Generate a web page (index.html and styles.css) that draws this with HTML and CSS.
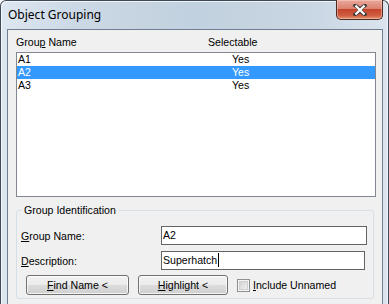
FILE: index.html
```html
<!DOCTYPE html>
<html lang="en">

<head>
    <meta charset="UTF-8">
    <title>Object Grouping</title>
    <link rel="stylesheet" href="styles.css">
</head>

<body>
    <div class="window">
        <div class="titlebar">
            <div class="title">Object Grouping</div>
            <div class="close-btn">
                <svg width="16" height="12" viewBox="0 0 16 12">
                    <path d="M3 1.5 L8 5 L13 1.5 M3 10.5 L8 7 L13 10.5 M5.5 3.2 L10.5 8.8 M10.5 3.2 L5.5 8.8"
                        stroke="#3b3b3b" stroke-width="3.4" fill="none" stroke-linecap="square" />
                    <path d="M4.2 2.2 L11.8 9.8 M11.8 2.2 L4.2 9.8" stroke="#ffffff" stroke-width="2.2"
                        fill="none" stroke-linecap="square" />
                </svg>
            </div>
        </div>

        <div class="client">
            <div class="list-header">
                <span class="col-name">Grou<u>p</u> Name</span>
                <span class="col-select">Selectable</span>
            </div>

            <div class="listbox">
                <div class="list-row">
                    <span class="col-name">A1</span>
                    <span class="col-yes">Yes</span>
                </div>
                <div class="list-row selected">
                    <span class="col-name">A2</span>
                    <span class="col-yes">Yes</span>
                </div>
                <div class="list-row">
                    <span class="col-name">A3</span>
                    <span class="col-yes">Yes</span>
                </div>
            </div>

            <fieldset class="groupbox">
                <legend>Group Identification</legend>

                <div class="field-row">
                    <label class="field-label"><u>G</u>roup Name:</label>
                    <div class="edit edit-name">A2</div>
                </div>

                <div class="field-row second">
                    <label class="field-label"><u>D</u>escription:</label>
                    <div class="edit edit-desc">Superhatch<span class="caret"></span></div>
                </div>

                <div class="button-row">
                    <button class="btn btn-find"><u>F</u>ind Name &lt;</button>
                    <button class="btn btn-highlight"><u>H</u>ighlight &lt;</button>
                    <span class="checkbox"></span>
                    <span class="check-label"><u>I</u>nclude Unnamed</span>
                </div>
            </fieldset>
        </div>
    </div>
</body>

</html>
```

FILE: styles.css
```css
* {
    margin: 0;
    padding: 0;
    box-sizing: border-box;
}

body {
    width: 389px;
    height: 304px;
    overflow: hidden;
    font-family: 'Liberation Sans', Arial, sans-serif;
    font-size: 10.6px;
    color: #000000;
    background: #ffffff;
}

u {
    text-decoration: underline;
    text-underline-offset: 1px;
}

/* Window frame */
.window {
    width: 389px;
    height: 304px;
    padding: 0 5px 0 6px;
    border: 1px solid #3e4a58;
    border-bottom: none;
    border-radius: 6px 6px 0 0;
    background: linear-gradient(90deg, #dde7f1 0%, #cbd8e5 20%, #c2d1df 50%, #c9d6e3 80%, #dae4ee 100%);
    box-shadow: inset 1px 1px 0 rgba(255, 255, 255, 0.7), inset -1px 0 0 rgba(255, 255, 255, 0.6);
}

.titlebar {
    height: 28px;
    display: flex;
    justify-content: space-between;
    align-items: flex-start;
}

.title {
    font-family: 'Noto Sans', 'Open Sans', sans-serif;
    font-size: 12px;
    line-height: 16px;
    padding: 6px 0 0 1px;
    color: #000000;
}

.close-btn {
    width: 47px;
    height: 20px;
    margin-top: -1px;
    border: 1px solid #4f2a23;
    border-top: none;
    border-radius: 0 0 5px 5px;
    background: linear-gradient(#e9a99c 0%, #dd8270 45%, #c5452c 50%, #cf5b3f 80%, #e0936c 100%);
    box-shadow: inset 0 0 0 1px rgba(255, 220, 210, 0.45);
    display: flex;
    align-items: center;
    justify-content: center;
}

/* Client area */
.client {
    height: 275px;
    border: 1px solid #6f7f91;
    border-bottom: none;
    background: #f0f0f0;
    padding: 6px 0 0 8px;
}

.list-header {
    display: flex;
    height: 13px;
    line-height: 13px;
}

.list-header .col-name {
    width: 192px;
}

.listbox {
    width: 360px;
    height: 145px;
    margin-top: 3px;
    border: 1px solid #828790;
    background: #ffffff;
}

.list-row {
    display: flex;
    height: 13px;
    line-height: 13px;
    padding-left: 1px;
}

.list-row .col-name {
    width: 214px;
}

.list-row.selected {
    background: #3399ff;
    color: #ffffff;
}

/* Group box */
.groupbox {
    width: 358px;
    margin-top: 7px;
    border: 1px solid #d5dfe5;
    border-radius: 3px;
    padding: 9px 4px 3px 4px;
}

.groupbox legend {
    padding: 0 2px;
    margin-left: 1px;
    line-height: 13px;
}

.field-row {
    display: flex;
    align-items: center;
    height: 19px;
}

.field-row.second {
    margin-top: 6px;
}

.field-label {
    width: 140px;
}

.edit {
    height: 19px;
    line-height: 17px;
    padding-left: 1px;
    border: 1px solid #646464;
    background: #ffffff;
}

.edit-name {
    width: 206px;
}

.edit-desc {
    width: 204px;
}

.caret {
    display: inline-block;
    width: 1px;
    height: 14px;
    background: #000000;
    vertical-align: -3px;
    margin-left: 1px;
}

.button-row {
    display: flex;
    align-items: center;
    margin-top: 5px;
    padding-left: 5px;
    height: 20px;
}

.btn {
    height: 20px;
    font-family: inherit;
    font-size: inherit;
    color: #000000;
    border: 1px solid #707070;
    border-radius: 3px;
    background: linear-gradient(#f2f2f2 0%, #ebebeb 50%, #dddddd 50%, #cfcfcf 100%);
    box-shadow: inset 0 0 0 1px rgba(255, 255, 255, 0.75);
}

.btn-find {
    width: 103px;
}

.btn-highlight {
    width: 90px;
    margin-left: 9px;
}

.checkbox {
    width: 13px;
    height: 13px;
    margin-left: 9px;
    border: 1px solid #8e8f8f;
    background: linear-gradient(135deg, #cbcbcb 0%, #e6e6e6 60%, #f6f6f6 100%);
    box-shadow: inset 0 0 0 1px #f4f4f4, inset 0 0 0 2px #cfcfcf;
}

.check-label {
    margin-left: 3px;
}
```
